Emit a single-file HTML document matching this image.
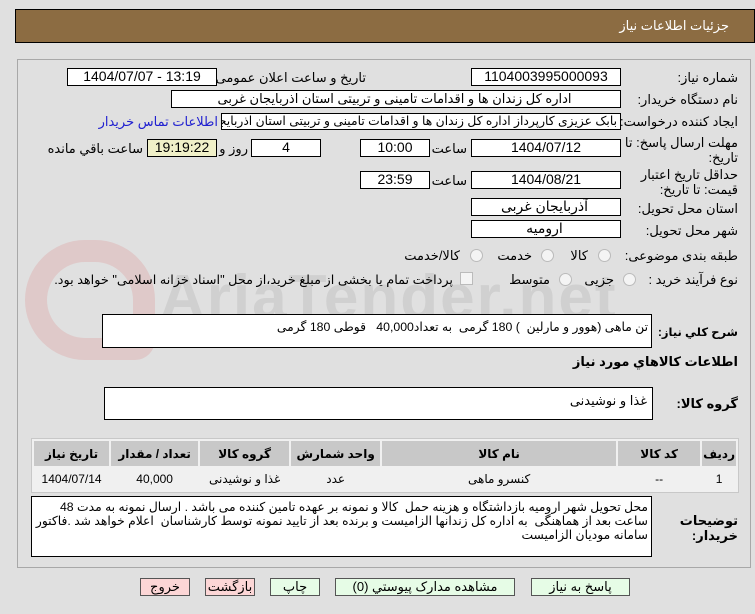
<!DOCTYPE html>
<html><head><meta charset="utf-8"><style>
body{margin:0;width:755px;height:614px;background:#e0e0e0;font-family:"Liberation Sans","DejaVu Sans",sans-serif;font-size:13px;color:#000;position:relative;overflow:hidden}
.a{position:absolute;white-space:nowrap}
.r{text-align:right;direction:rtl}
.box{position:absolute;background:#fff;border:1px solid #000;box-sizing:border-box;font-size:14px;line-height:15px;text-align:center;white-space:nowrap;overflow:hidden}
.lb{position:absolute;direction:rtl;text-align:right;white-space:nowrap;font-size:13px}
.rad{position:absolute;width:11px;height:11px;border:1px solid #bbb;border-radius:50%;background:#f4f4f4}
.btn{position:absolute;top:578px;height:18px;border:1px solid #555;box-sizing:border-box;font-size:13px;text-align:center;line-height:16px}
.g{background:#e6fce6}.p{background:#fcd6d6}
table{position:absolute;left:31px;top:438px;width:708px;border-collapse:separate;border-spacing:2px;background:#f0f0f0;border:1px solid #c8c8c8;direction:rtl;font-size:12px}
th{background:#c8c8c8;height:23px;font-weight:bold}
td{background:#f0f0f0;height:20px;text-align:center}
</style></head><body>
<div class="a" style="left:15px;top:9px;width:740px;height:34px;background:#8c6c42;border:1px solid #000;box-sizing:border-box"></div>
<div class="lb" style="right:26px;top:18px;color:#fff;font-size:13px">جزئیات اطلاعات نیاز</div>
<div class="a" style="left:17px;top:59px;width:734px;height:509px;border:1px solid #a8a8a8;box-sizing:border-box"></div>
<!-- watermark -->
<div class="a" style="left:25px;top:240px;width:130px;height:120px;border:22px solid rgba(220,120,120,0.22);border-radius:60px 60px 20px 60px;box-sizing:border-box"></div>
<div class="a" style="left:160px;top:262px;font-size:62px;font-weight:bold;color:rgba(150,150,150,0.22);letter-spacing:2px">AriaTender.net</div>

<div class="lb" style="right:17px;top:70px">شماره نیاز:</div>
<div class="box" style="left:471px;top:68px;width:150px;height:18px">1104003995000093</div>
<div class="lb" style="right:389px;top:70px">تاریخ و ساعت اعلان عمومی:</div>
<div class="box" style="left:67px;top:68px;width:150px;height:18px">1404/07/07 - 13:19</div>

<div class="lb" style="right:17px;top:92px">نام دستگاه خریدار:</div>
<div class="box r" style="left:171px;top:90px;width:450px;height:18px;padding-right:3px;font-size:13px">اداره کل زندان ها و اقدامات تامینی و تربیتی استان اذربایجان غربی</div>

<div class="lb" style="right:17px;top:114px">ایجاد کننده درخواست:</div>
<div class="box r" style="left:221px;top:113px;width:400px;height:17px;padding-right:3px;font-size:12.3px">بابک عزیزی کارپرداز اداره کل زندان ها و اقدامات تامینی و تربیتی استان اذربایجان</div>
<div class="lb" style="right:537px;top:114px;color:#2020d0">اطلاعات تماس خریدار</div>

<div class="lb" style="right:17px;top:135px">مهلت ارسال پاسخ: تا</div>
<div class="lb" style="right:17px;top:150px">تاریخ:</div>
<div class="box" style="left:471px;top:139px;width:150px;height:18px">1404/07/12</div>
<div class="lb" style="right:288px;top:141px">ساعت</div>
<div class="box" style="left:360px;top:139px;width:70px;height:18px">10:00</div>
<div class="box" style="left:251px;top:139px;width:70px;height:18px">4</div>
<div class="lb" style="right:507px;top:141px">روز و</div>
<div class="box" style="left:147px;top:139px;width:70px;height:18px;background:#f0f0c8">19:19:22</div>
<div class="lb" style="right:612px;top:141px">ساعت باقي مانده</div>

<div class="lb" style="right:17px;top:167px">حداقل تاریخ اعتبار</div>
<div class="lb" style="right:17px;top:182px">قیمت: تا تاریخ:</div>
<div class="box" style="left:471px;top:171px;width:150px;height:18px">1404/08/21</div>
<div class="lb" style="right:288px;top:173px">ساعت</div>
<div class="box" style="left:360px;top:171px;width:70px;height:18px">23:59</div>

<div class="lb" style="right:17px;top:201px">استان محل تحویل:</div>
<div class="box r" style="left:471px;top:198px;width:150px;height:18px;padding-right:3px">آذربایجان غربی</div>
<div class="lb" style="right:17px;top:223px">شهر محل تحویل:</div>
<div class="box r" style="left:471px;top:220px;width:150px;height:18px;padding-right:3px">ارومیه</div>

<div class="lb" style="right:17px;top:248px">طبقه بندی موضوعی:</div>
<div class="rad" style="left:598px;top:249px"></div><div class="lb" style="right:167px;top:248px">کالا</div>
<div class="rad" style="left:541px;top:249px"></div><div class="lb" style="right:223px;top:248px">خدمت</div>
<div class="rad" style="left:470px;top:249px"></div><div class="lb" style="right:295px;top:248px">کالا/خدمت</div>

<div class="lb" style="right:17px;top:272px">نوع فرآیند خرید :</div>
<div class="rad" style="left:623px;top:273px"></div><div class="lb" style="right:141px;top:272px">جزیی</div>
<div class="rad" style="left:559px;top:273px"></div><div class="lb" style="right:205px;top:272px">متوسط</div>
<div class="a" style="left:460px;top:272px;width:11px;height:11px;border:1px solid #bbb;background:#f4f4f4"></div>
<div class="lb" style="right:302px;top:272px;font-size:12.8px">پرداخت تمام یا بخشی از مبلغ خرید،از محل "اسناد خزانه اسلامی" خواهد بود.</div>

<div class="lb" style="right:17px;top:325px;font-weight:bold;font-size:11.5px">شرح کلي نیاز:</div>
<div class="box r" style="left:102px;top:314px;width:550px;height:34px;text-align:right;padding:5px 3px 0 0;font-size:12.3px">تن ماهی (هوور و مارلین&nbsp; ) 180 گرمی&nbsp; به تعداد40,000&nbsp;&nbsp; قوطی 180 گرمی</div>
<div class="lb" style="right:17px;top:354px;font-weight:bold">اطلاعات کالاهاي مورد نیاز</div>
<div class="lb" style="right:17px;top:396px;font-weight:bold">گروه کالا:</div>
<div class="box r" style="left:104px;top:387px;width:549px;height:33px;text-align:right;padding:5px 5px 0 0;font-size:13px">غذا و نوشیدنی</div>

<table>
<tr><th style="width:27px">ردیف</th><th style="width:80px">کد کالا</th><th style="width:232px">نام کالا</th><th style="width:87px">واحد شمارش</th><th style="width:87px">گروه کالا</th><th style="width:85px">تعداد / مقدار</th><th>تاریخ نیاز</th></tr>
<tr><td>1</td><td>--</td><td>کنسرو ماهی</td><td>عدد</td><td>غذا و نوشیدنی</td><td>40,000</td><td>1404/07/14</td></tr>
</table>

<div class="lb" style="right:17px;top:513px;font-weight:bold">توضیحات</div>
<div class="lb" style="right:17px;top:528px;font-weight:bold">خریدار:</div>
<div class="box r" style="left:31px;top:496px;width:621px;height:61px;text-align:right;padding:3px 3px 0 3px;font-size:12.3px;line-height:14px">محل تحویل شهر ارومیه بازداشتگاه و هزینه حمل&nbsp; کالا و نمونه بر عهده تامین کننده می باشد . ارسال نمونه به مدت 48<br>ساعت بعد از هماهنگی&nbsp; به اداره کل زندانها الزامیست و برنده بعد از تایید نمونه توسط کارشناسان&nbsp; اعلام خواهد شد .فاکتور<br>سامانه مودیان الزامیست</div>

<div class="btn g" style="left:531px;width:99px">پاسخ به نیاز</div>
<div class="btn g" style="left:335px;width:180px">مشاهده مدارک پیوستي (0)</div>
<div class="btn g" style="left:270px;width:50px">چاپ</div>
<div class="btn p" style="left:205px;width:50px">بازگشت</div>
<div class="btn p" style="left:140px;width:50px">خروج</div>
</body></html>
